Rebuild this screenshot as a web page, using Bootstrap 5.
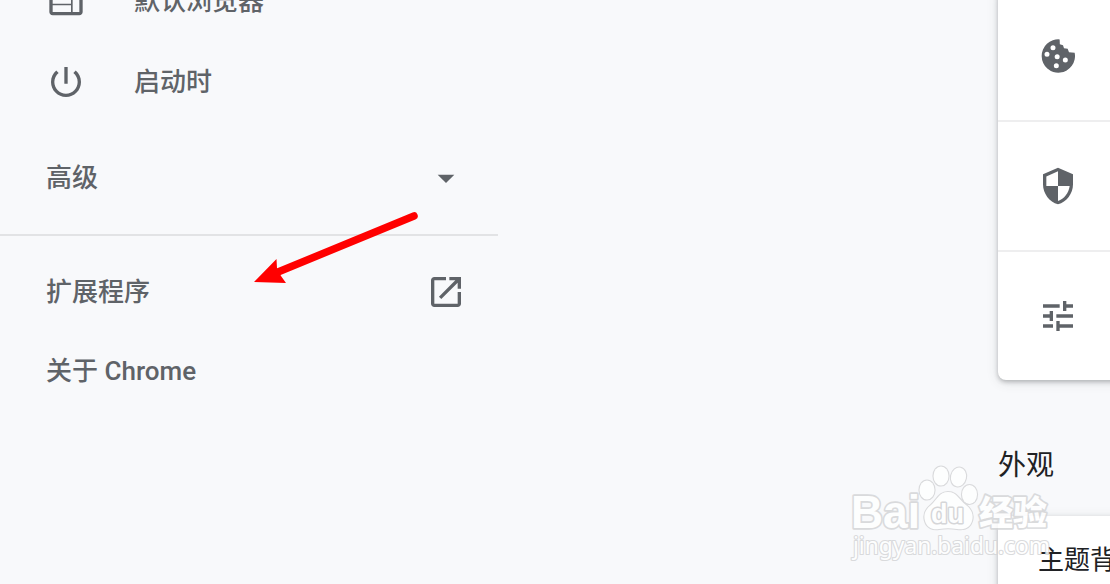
<!DOCTYPE html>
<html lang="zh-CN">
<head>
  <meta charset="UTF-8" />
  <meta name="viewport" content="width=device-width, initial-scale=1.0" />
  <title>设置</title>
  <link rel="stylesheet" href="https://cdn.jsdelivr.net/npm/bootstrap@5.3.3/dist/css/bootstrap.min.css" />
  <style>
    body { background:#f8f9fb; color:#202124; font-family:Roboto, "Noto Sans CJK SC", sans-serif; font-size:26px; line-height:1; }
    .page { height:584px; }
    .side-menu { width:498px; color:#5f6368; font-weight:500; margin-top:-38px; }
    .side-menu a { height:80px; padding:0 32px 2px 46px; color:inherit; }
    .side-menu .advanced { height:112px; }
    .menu-label { padding-top:2px; }
    .menu-icon { width:40px; height:40px; fill:currentColor; flex:none; margin-top:2px; }
    .menu-gap { gap:48px; }
    .menu-line { height:2px; background:#e2e3e5; margin-bottom:16px; }
    .settings-col { width:112px; margin-top:-8px; }
    .panel { background:#fff; width:680px; box-shadow:0 2px 4px rgba(60,64,67,.3), 0 2px 12px rgba(60,64,67,.15); }
    .panel-first { border-radius:0 0 8px 8px; }
    .panel-theme { border-radius:8px 8px 0 0; height:120px; }
    .panel-row { height:128px; padding-left:40px; color:#5f6368; }
    .panel-row + .panel-row { border-top:2px solid #eeeeef; height:130px; }
    .panel-row svg { width:40px; height:40px; fill:currentColor; }
    .section-title { height:136px; font-size:28px; font-weight:400; padding-top:72px; line-height:28px; }
    .theme-row { height:88px; padding-left:40px; }
    .overlay { left:0; top:0; pointer-events:none; }
    .wm { fill:#fff; stroke:#d4d5d7; stroke-width:2.2; paint-order:stroke; stroke-linejoin:round; opacity:.85; }
    .wm-brand { stroke:#d4d5d7; stroke-width:3.4; }
    .wm-du { fill:#fff; stroke:#cfd0d2; stroke-width:3; }
  </style>
</head>
<body>
  <div class="page position-relative overflow-hidden d-flex justify-content-between">
    <nav class="side-menu">
      <a href="#" class="d-flex align-items-center menu-gap text-decoration-none">
        <svg class="menu-icon" viewBox="0 0 24 24"><path d="M20 4H4c-1.1 0-2 .9-2 2v12c0 1.1.9 2 2 2h16c1.1 0 2-.9 2-2V6c0-1.1-.9-2-2-2zm-5 14H4v-4h11v4zm0-5H4V9h11v4zm5 5h-4V9h4v9z"/></svg>
        <span>默认浏览器</span>
      </a>
      <a href="#" class="d-flex align-items-center menu-gap text-decoration-none">
        <svg class="menu-icon" viewBox="0 0 24 24"><path d="M13 3h-2v10h2V3zm4.83 2.17l-1.42 1.42C17.99 7.86 19 9.81 19 12c0 3.87-3.13 7-7 7s-7-3.13-7-7c0-2.19 1.01-4.14 2.58-5.42L6.17 5.17C4.23 6.82 3 9.26 3 12c0 4.97 4.03 9 9 9s9-4.03 9-9c0-2.74-1.23-5.18-3.17-6.83z"/></svg>
        <span class="menu-label">启动时</span>
      </a>
      <a href="#" class="advanced d-flex align-items-center justify-content-between text-decoration-none">
        <span class="menu-label">高级</span>
        <svg class="menu-icon" viewBox="0 0 24 24"><path d="M7 10l5 5 5-5z"/></svg>
      </a>
      <div class="menu-line"></div>
      <a href="#" class="d-flex align-items-center justify-content-between text-decoration-none">
        <span class="menu-label">扩展程序</span>
        <svg class="menu-icon" viewBox="0 0 24 24"><path d="M19 19H5V5h7V3H5c-1.11 0-2 .9-2 2v14c0 1.1.89 2 2 2h14c1.1 0 2-.9 2-2v-7h-2v7zM14 3v2h3.59l-9.83 9.83 1.41 1.41L19 6.41V10h2V3h-7z"/></svg>
      </a>
      <a href="#" class="d-flex align-items-center text-decoration-none"><span>关于 Chrome</span></a>
    </nav>

    <main class="settings-col">
      <div class="panel panel-first">
        <div class="panel-row d-flex align-items-center">
          <svg viewBox="0 0 24 24"><path fill-rule="evenodd" d="M13 2.05A10 10 0 1 0 22 10L18.6 9.8 17.8 7.7 15.6 7.3 15 5.5 13.1 4.9zM9 5.5a1.5 1.5 0 1 1 0 3 1.5 1.5 0 0 1 0-3zM5.4 9.4a1.5 1.5 0 1 1 0 3 1.5 1.5 0 0 1 0-3zM11.5 10.9a1.5 1.5 0 1 1 0 3 1.5 1.5 0 0 1 0-3zM16.4 12.9a1.5 1.5 0 1 1 0 3 1.5 1.5 0 0 1 0-3zM11 16.4a1.5 1.5 0 1 1 0 3 1.5 1.5 0 0 1 0-3z"/></svg>
        </div>
        <div class="panel-row d-flex align-items-center">
          <svg viewBox="0 0 24 24"><path d="M12 1L3 5v6c0 5.55 3.84 10.74 9 12 5.16-1.26 9-6.45 9-12V5l-9-4zm0 10.99h7c-.53 4.12-3.28 7.79-7 8.94V12H5V6.3l7-3.11v8.8z"/></svg>
        </div>
        <div class="panel-row d-flex align-items-center">
          <svg viewBox="0 0 24 24"><path d="M3 17v2h6v-2H3zM3 5v2h10V5H3zm10 16v-2h8v-2h-8v-2h-2v6h2zM7 9v2H3v2h4v2h2V9H7zm14 4v-2H11v2h10zm-6-4h2V7h4V5h-4V3h-2v6z"/></svg>
        </div>
      </div>
      <h2 class="section-title mb-0">外观</h2>
      <div class="panel panel-theme">
        <div class="theme-row d-flex align-items-center text-nowrap">主题背景</div>
      </div>
    </main>

    <!-- arrow and watermark lie over the page -->
    <svg class="overlay position-absolute" width="1110" height="584" viewBox="0 0 1110 584">
      <path d="M414 216L278 272" stroke="#f00" stroke-width="7.5" stroke-linecap="round"/>
      <path d="M254 282L276.5 259 277 268 281 276 286 283z" fill="#f00"/>
      <g class="wm">
        <text class="wm-brand" x="851" y="527.5" font-family="Liberation Sans, sans-serif" font-weight="700" font-size="46" textLength="69" lengthAdjust="spacingAndGlyphs">Bai</text>
        <ellipse cx="927" cy="490" rx="7.5" ry="9.5"/>
        <ellipse cx="941" cy="476" rx="7.5" ry="9.5"/>
        <ellipse cx="958.5" cy="477" rx="7.5" ry="9.5" transform="rotate(12 958.5 477)"/>
        <ellipse cx="969.5" cy="494.5" rx="7.5" ry="9.5"/>
        <path d="M948 492c-9 0-11 8-17 13-5 4-8 9-6 16 2 7 8 9 14 8 6-1 12-1 18 0 7 1 13-1 15-8 2-7-1-12-6-16-7-5-9-13-18-13z"/>
        <text class="wm-du" x="931" y="523" font-family="Liberation Sans, sans-serif" font-weight="700" font-size="27" textLength="33" lengthAdjust="spacingAndGlyphs">du</text>
        <text class="wm-brand" x="979" y="525" font-family="Noto Sans CJK SC, sans-serif" font-weight="900" font-size="34">经验</text>
        <text x="853" y="554" font-family="Noto Sans, sans-serif" font-weight="400" font-size="23" textLength="197" lengthAdjust="spacingAndGlyphs">jingyan.baidu.com</text>
      </g>
    </svg>
  </div>
  <script src="https://cdn.jsdelivr.net/npm/bootstrap@5.3.3/dist/js/bootstrap.bundle.min.js"></script>
</body>
</html>
